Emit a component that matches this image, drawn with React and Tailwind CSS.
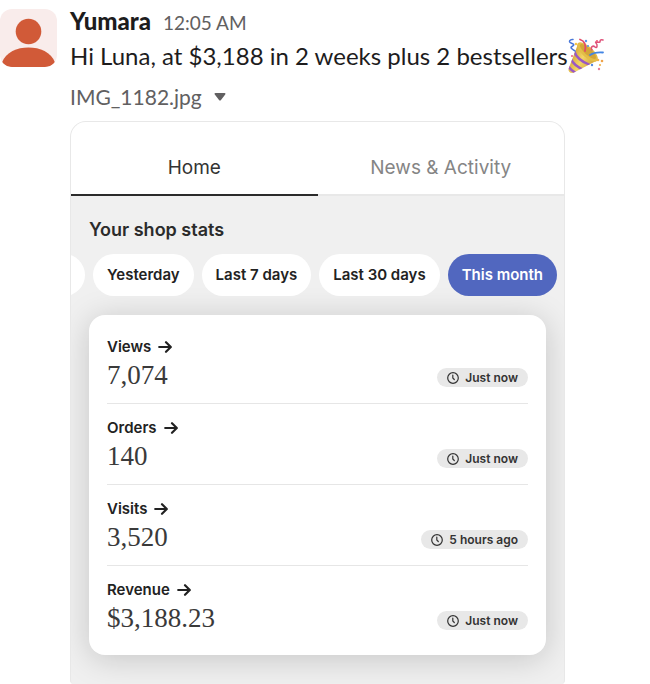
import React from "react";

const stats = [
  { label: "Views", value: "7,074", updated: "Just now" },
  { label: "Orders", value: "140", updated: "Just now" },
  { label: "Visits", value: "3,520", updated: "5 hours ago" },
  { label: "Revenue", value: "$3,188.23", updated: "Just now" },
];

const ranges = ["Yesterday", "Last 7 days", "Last 30 days", "This month"];

function Avatar() {
  return (
    <svg className="mt-[9px] h-[58px] w-[57px] shrink-0 rounded-xl bg-[#f9eceb]" viewBox="0 0 57 58" role="img" aria-label="Yumara">
      <circle cx="28.5" cy="22.5" r="12.8" fill="#d15a38" />
      <path d="M2 53.500C6 43 17 38.500 28.500 38.500S51 43 55 53.500C52 57 49 58 45 58H12C8 58 4.500 57 2 53.500Z" fill="#d15a38" />
    </svg>
  );
}

function PartyPopper() {
  return (
    <svg className="h-9 w-9 shrink-0" viewBox="0 0 36 36" role="img" aria-label="Party popper">
      <defs>
        <linearGradient id="cone" x1="0" y1="0.3" x2="1" y2="0.8">
          <stop offset="0" stopColor="#c9962c" />
          <stop offset="0.45" stopColor="#f3d564" />
          <stop offset="1" stopColor="#c48d2b" />
        </linearGradient>
        <clipPath id="coneClip">
          <path d="M10 6 0.500 31C0 34 3 36 6 34.500L30 22Z" />
        </clipPath>
      </defs>
      <path d="M10 6 0.500 31C0 34 3 36 6 34.500L30 22Z" fill="url(#cone)" />
      <g clipPath="url(#coneClip)" fill="none" stroke="#9a58c4" strokeWidth="2.400">
        <path d="M6 13C8 19 14 24 22 27" />
        <path d="M3 21C5 26 9 29 16 32" />
        <path d="M0 28C2 31 4 33 8 35" />
      </g>
      <ellipse cx="19.500" cy="14" rx="13" ry="5.500" transform="rotate(42 19.500 14)" fill="#e3bd48" />
      <ellipse cx="20" cy="13.500" rx="10.500" ry="3.400" transform="rotate(42 20 13.500)" fill="#d3a538" />
      <g fill="none" strokeLinecap="round" strokeWidth="1.800">
        <path d="M17 13C18 8 17 3 12 1.500" stroke="#e34b67" />
        <path d="M22 17C25 15 29 14 35 14.500" stroke="#4285e4" />
        <path d="M5 1.500C2 1 0 4 3 5S7 7 4 8.500 6 12 7 13" stroke="#4776d8" strokeWidth="1.500" />
        <path d="M24 12C22 9 25 7 27 9S30 7 28 5 32 5 32 4 32 1 35 2" stroke="#df527a" strokeWidth="1.500" />
      </g>
      <circle cx="8" cy="6" r="1.300" fill="#f5c34b" />
      <circle cx="18" cy="3" r="1.200" fill="#5796e8" />
      <circle cx="20" cy="8" r="1.100" fill="#5796e8" />
      <circle cx="29" cy="3" r="1.100" fill="#f15a7a" />
      <circle cx="4" cy="18" r="1.100" fill="#ed6688" />
      <circle cx="30" cy="22" r="1.300" fill="#f1b14b" />
      <circle cx="34" cy="23" r="1.300" fill="#efa34b" />
      <circle cx="24" cy="27" r="1.200" fill="#548be2" />
      <circle cx="32" cy="27" r="1.100" fill="#f0b24d" />
      <circle cx="31" cy="31" r="1.200" fill="#e77a9a" />
    </svg>
  );
}

function Arrow() {
  return (
    <svg className="h-3.5 w-3.5" viewBox="0 0 14 14" fill="none" stroke="currentColor" strokeWidth="2.200" strokeLinecap="round" strokeLinejoin="round" aria-hidden="true">
      <path d="M1.200 7h11M8 2.200 12.800 7 8 11.800" />
    </svg>
  );
}

function Clock() {
  return (
    <svg className="h-3 w-3" viewBox="0 0 12 12" fill="none" stroke="currentColor" strokeWidth="1.200" strokeLinecap="round" aria-hidden="true">
      <circle cx="6" cy="6" r="5.300" />
      <path d="M5.800 3v3l1.500 1.500" />
    </svg>
  );
}

function StatRow({ label, value, updated }) {
  return (
    <li className="flex h-[81px] items-end justify-between border-b border-[#e6e6e6] pb-3.5 last:border-transparent">
      <div>
        <a href="#stats" className="flex items-center gap-[7px] text-[15px] leading-5 font-semibold text-[#222]">
          {label}
          <Arrow />
        </a>
        <p className="h-8 font-['Liberation_Serif',serif] text-[27px] leading-9 text-[#3a3a3a]">{value}</p>
      </div>
      <span className="mb-0.5 flex h-[19px] items-center gap-1.5 rounded-full bg-[#e8e8e8] px-2.5 text-[12px] font-semibold text-[#333]">
        <Clock />
        {updated}
      </span>
    </li>
  );
}

function ShopStats() {
  return (
    <section className="mr-[85px] overflow-hidden rounded-t-2xl rounded-b-sm border border-b-0 border-[#e8e8e8] bg-[#f0f0f0] font-['Inter',sans-serif]">
      <div className="grid h-[74px] grid-cols-2 bg-white text-[19px]" role="tablist">
        <button role="tab" aria-selected="true" className="border-b-2 border-[#2b2b2b] pt-5 text-[#333]">Home</button>
        <button role="tab" aria-selected="false" className="border-b-2 border-[#e8e8e8] pt-5 text-[#858585]">News &amp; Activity</button>
      </div>
      <h2 className="mt-5 ml-[18px] text-[18px] leading-7 font-semibold text-[#2b2b2b]">Your shop stats</h2>
      <div className="relative z-10 mt-2.5 flex justify-end gap-2 pr-[7px]">
        <button aria-label="Today" className="h-[42px] w-20 shrink-0 rounded-full bg-white" />
        {ranges.map((range) => (
          <button
            key={range}
            className={
              range === "This month"
                ? "h-[42px] shrink-0 rounded-full bg-[#5167bf] px-3.5 text-[15px] font-semibold whitespace-nowrap text-white"
                : "h-[42px] shrink-0 rounded-full bg-white px-3.5 text-[15px] font-semibold whitespace-nowrap text-[#222]"
            }
          >
            {range}
          </button>
        ))}
      </div>
      <ul className="mx-[18px] mt-[19px] mb-[29px] rounded-2xl bg-white px-[18px] py-2 shadow-[0_4px_32px_rgba(0,0,0,0.18)]">
        {stats.map((stat) => (
          <StatRow key={stat.label} {...stat} />
        ))}
      </ul>
    </section>
  );
}

export default function App() {
  return (
    <main className="flex gap-[13px] bg-white font-['Lato',sans-serif] text-[#1d1c1d]">
      <Avatar />
      <div className="min-w-0 flex-1">
        <header className="flex items-baseline gap-3 pt-[5px]">
          <h1 className="text-[24px] leading-8 font-black">Yumara</h1>
          <time className="text-[19px] leading-8 text-[#616061]">12:05 AM</time>
        </header>
        <p className="flex h-[34px] items-center text-[24px] whitespace-nowrap">
          Hi Luna, at $3,188 in 2 weeks plus 2 bestsellers
          <PartyPopper />
        </p>
        <button className="mt-2 mb-[9px] flex h-[31px] items-center gap-3 text-[21px] text-[#616061]">
          IMG_1182.jpg
          <svg className="h-2 w-3" viewBox="0 0 12 8" fill="currentColor" aria-hidden="true">
            <path d="M1.500 0h9c1 0 1.300.8.700 1.500L7 7c-.6.800-1.400.8-2 0L.8 1.500C.2.8.5 0 1.500 0Z" />
          </svg>
        </button>
        <ShopStats />
      </div>
    </main>
  );
}
